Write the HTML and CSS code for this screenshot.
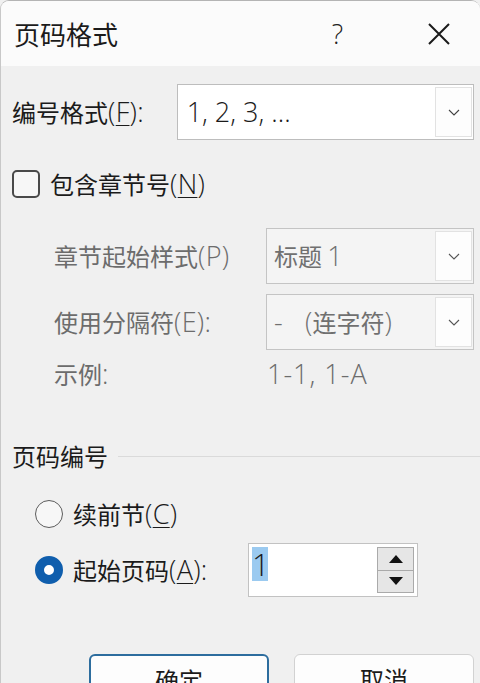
FILE: index.html
```html
<!DOCTYPE html>
<html lang="zh-CN">

<head>
    <meta charset="UTF-8">
    <meta name="viewport" content="width=device-width, initial-scale=1.0">
    <title>页码格式</title>
    <link rel="stylesheet" href="styles.css">
</head>

<body>
    <div class="dialog">
        <div class="titlebar">
            <span class="title">页码格式</span>
            <span class="help">?</span>
            <svg class="close" width="24" height="24" viewBox="0 0 24 24">
                <path d="M2 2 L22 22 M22 2 L2 22" stroke="#1a1a1a" stroke-width="2" fill="none" />
            </svg>
        </div>

        <div class="content">
            <div class="row format-row">
                <span class="label">编号格式<span class="lat">(<u>F</u>):</span></span>
                <div class="combo wide">
                    <span class="value lat">1, 2, 3, ...</span>
                    <span class="drop"><svg width="12" height="7" viewBox="0 0 12 7"><path d="M1 1 L6 6 L11 1" stroke="#444" stroke-width="1.1" fill="none" /></svg></span>
                </div>
            </div>

            <div class="row check-row">
                <span class="checkbox"></span>
                <span class="label">包含章节号<span class="lat">(<u>N</u>)</span></span>
            </div>

            <div class="row sub-row first">
                <span class="label muted sub-label">章节起始样式<span class="lat">(P)</span></span>
                <div class="combo narrow disabled">
                    <span class="value">标题 <span class="lat">1</span></span>
                    <span class="drop"><svg width="12" height="7" viewBox="0 0 12 7"><path d="M1 1 L6 6 L11 1" stroke="#555" stroke-width="1.1" fill="none" /></svg></span>
                </div>
            </div>

            <div class="row sub-row">
                <span class="label muted sub-label">使用分隔符<span class="lat">(E):</span></span>
                <div class="combo narrow disabled">
                    <span class="value"><span class="lat">-&nbsp;&nbsp;&nbsp;(</span>连字符<span class="lat">)</span></span>
                    <span class="drop"><svg width="12" height="7" viewBox="0 0 12 7"><path d="M1 1 L6 6 L11 1" stroke="#555" stroke-width="1.1" fill="none" /></svg></span>
                </div>
            </div>

            <div class="row example-row">
                <span class="label muted sub-label">示例<span class="lat">:</span></span>
                <span class="label muted lat example">1-1, 1-A</span>
            </div>

            <div class="group-head">
                <span class="label">页码编号</span>
                <span class="rule"></span>
            </div>

            <div class="row radio-row">
                <span class="radio"></span>
                <span class="label">续前节<span class="lat">(<u>C</u>)</span></span>
            </div>

            <div class="row radio-row start">
                <span class="radio checked"></span>
                <span class="label start-label">起始页码<span class="lat">(<u>A</u>):</span></span>
                <div class="spin">
                    <span class="spin-value"><span class="selected">1</span></span>
                    <div class="spin-buttons">
                        <span class="spin-btn"><svg width="14" height="8" viewBox="0 0 14 8"><path d="M0 8 L7 0 L14 8 Z" fill="#111" /></svg></span>
                        <span class="spin-btn"><svg width="14" height="8" viewBox="0 0 14 8"><path d="M0 0 L14 0 L7 8 Z" fill="#111" /></svg></span>
                    </div>
                </div>
            </div>

            <div class="buttons">
                <button class="btn default">确定</button>
                <button class="btn">取消</button>
            </div>
        </div>
    </div>
</body>

</html>
```

FILE: styles.css
```css
body {
    margin: 0;
    background-color: #f0f0f0;
    font-family: "Noto Sans CJK SC", sans-serif;
    color: #1b1b1b;
    overflow: hidden;
}

.dialog {
    width: 480px;
    height: 683px;
    box-sizing: border-box;
    border-top: 1px solid #b4b4b4;
    border-left: 1px solid #c8c8c8;
    border-radius: 9px 9px 0 0;
    background-color: #f0f0f0;
    overflow: hidden;
}

.titlebar {
    height: 65px;
    background-color: #fbfbfb;
    display: flex;
    align-items: center;
    padding-left: 13px;
}

.title {
    font-size: 26px;
    line-height: 30px;
    flex: 1;
}

.help {
    font-family: "Open Sans", sans-serif;
    font-weight: 300;
    font-size: 27px;
    line-height: 30px;
    color: #222;
    margin-right: 84px;
}

.close {
    margin-right: 29px;
}

.content {
    padding: 18px 6px 0 11px;
}

.row {
    display: flex;
    align-items: center;
}

.label {
    font-size: 24px;
    line-height: 28px;
    white-space: nowrap;
}

/* latin glyphs sit larger and lighter than the CJK ones in the original */
.lat {
    font-family: "Open Sans", "Noto Sans", sans-serif;
    font-size: 27px;
    font-weight: 350;
    letter-spacing: 0.3px;
}

.label u {
    text-decoration-thickness: 1px;
    text-underline-offset: 3px;
}

.muted {
    color: #6c6c6c;
}

.format-row .label {
    width: 165px;
}

.combo {
    height: 56px;
    box-sizing: border-box;
    border: 1px solid #bdbdbd;
    background-color: #ffffff;
    display: flex;
    align-items: center;
    padding: 1px 1px 1px 9px;
}

.combo.wide {
    width: 298px;
}

.combo.narrow {
    width: 209px;
    padding-left: 7px;
}

.combo.disabled {
    background-color: #f4f4f4;
    border-color: #c4c4c4;
    color: #707070;
}

.combo .value {
    flex: 1;
    font-size: 24px;
    line-height: 28px;
}

.combo .value.lat {
    font-size: 27px;
    letter-spacing: 0;
}

.drop {
    width: 37px;
    height: 50px;
    box-sizing: border-box;
    border: 1px solid #e2e2e2;
    background-color: #fdfdfd;
    display: flex;
    align-items: center;
    justify-content: center;
}

.check-row {
    margin-top: 30px;
}

.checkbox {
    width: 28px;
    height: 28px;
    box-sizing: border-box;
    border: 2px solid #4a4a4a;
    border-radius: 5px;
    background-color: #f7f7f7;
    margin-right: 10px;
}

.sub-row.first {
    margin-top: 30px;
}

.sub-row {
    margin-bottom: 10px;
}

.sub-label {
    margin-left: 42px;
    width: 213px;
}

.example-row {
    margin-top: 2px;
}

.example {
    letter-spacing: 1px;
}

.group-head {
    display: flex;
    align-items: center;
    margin-top: 54px;
}

.rule {
    flex: 1;
    height: 1px;
    background-color: #dadada;
    margin-left: 10px;
    margin-right: -6px;
}

.radio-row {
    margin-left: 23px;
    margin-top: 30px;
}

.radio {
    width: 28px;
    height: 28px;
    box-sizing: border-box;
    border: 1.5px solid #5c5c5c;
    border-radius: 50%;
    margin-right: 10px;
    background-color: #f7f7f7;
}

.radio.checked {
    border: 9px solid #0f5ead;
    background-color: #ffffff;
}

.radio-row.start {
    margin-top: 15px;
}

.start-label {
    width: 175px;
}

.spin {
    width: 170px;
    height: 54px;
    box-sizing: border-box;
    border: 1px solid #c2c2c2;
    background-color: #ffffff;
    display: flex;
    padding: 3px;
}

.spin-value {
    flex: 1;
    font-family: "Open Sans", "Noto Sans", sans-serif;
    font-weight: 300;
    font-size: 31px;
    line-height: 34px;
    color: #1a1a1a;
}

.selected {
    display: inline-block;
    background-color: #9bcaf0;
    width: 16px;
    text-align: center;
}

.spin-buttons {
    width: 35px;
    display: flex;
    flex-direction: column;
    border: 1px solid #aaaaaa;
}

.spin-btn {
    flex: 1;
    display: flex;
    align-items: center;
    justify-content: center;
    background-color: #e6e6e6;
}

.spin-btn + .spin-btn {
    border-top: 1px solid #aaaaaa;
}

.buttons {
    display: flex;
    gap: 25px;
    margin-top: 57px;
    margin-left: 77px;
}

.btn {
    width: 181px;
    height: 50px;
    font-family: "Noto Sans CJK SC", sans-serif;
    font-size: 24px;
    color: #1b1b1b;
    background-color: #fdfdfd;
    border: 1px solid #d2d2d2;
    border-radius: 6px;
    padding: 6px 0 0;
    display: flex;
    justify-content: center;
    align-items: flex-start;
}

.btn.default {
    border: 2px solid #2d6d9e;
}
```
